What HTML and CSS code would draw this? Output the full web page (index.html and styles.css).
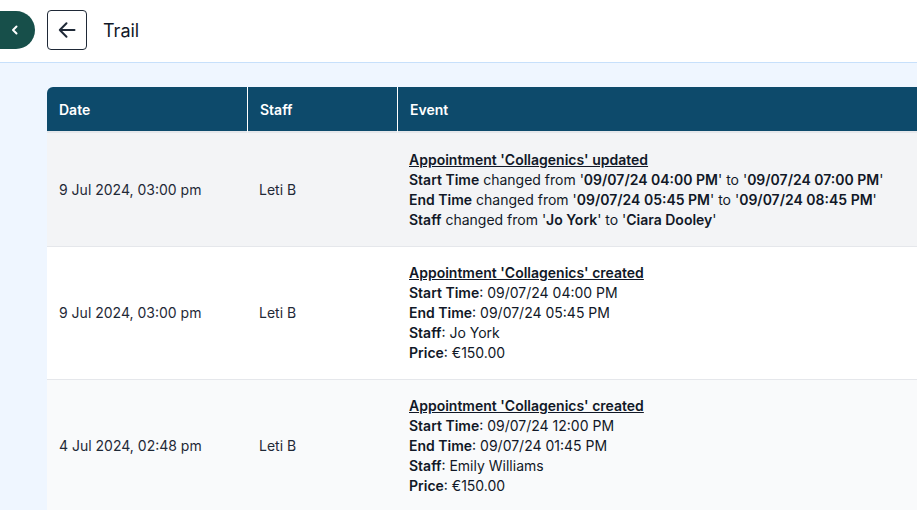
FILE: index.html
```html
<!DOCTYPE html>
<html lang="en">
<head>
    <meta charset="UTF-8">
    <meta name="viewport" content="width=device-width, initial-scale=1.0">
    <title>Trail</title>
    <link rel="stylesheet" href="styles.css">
</head>
<body>
    <header class="topbar">
        <button class="sidebar-toggle" aria-label="Collapse">
            <svg width="10" height="10" viewBox="0 0 10 10"><path d="M6.5 1.5 L3 5 L6.5 8.5" fill="none" stroke="#fff" stroke-width="2" stroke-linecap="round" stroke-linejoin="round"/></svg>
        </button>
        <button class="back-btn" aria-label="Back">
            <svg width="20" height="20" viewBox="0 0 20 20"><path d="M17.5 10 H2.8 M9.5 3.2 L2.8 10 L9.5 16.8" fill="none" stroke="#1f2937" stroke-width="2" stroke-linecap="round" stroke-linejoin="round"/></svg>
        </button>
        <h1>Trail</h1>
    </header>

    <main class="content">
        <table class="trail">
            <thead>
                <tr>
                    <th class="col-date">Date</th>
                    <th class="col-staff">Staff</th>
                    <th>Event</th>
                </tr>
            </thead>
            <tbody>
                <tr class="row-grey">
                    <td>9 Jul 2024, 03:00 pm</td>
                    <td>Leti B</td>
                    <td class="event">
                        <div class="event-title">Appointment 'Collagenics' updated</div>
                        <div><b>Start Time</b> changed from '<b>09/07/24 04:00 PM</b>' to '<b>09/07/24 07:00 PM</b>'</div>
                        <div><b>End Time</b> changed from '<b>09/07/24 05:45 PM</b>' to '<b>09/07/24 08:45 PM</b>'</div>
                        <div><b>Staff</b> changed from '<b>Jo York</b>' to '<b>Ciara Dooley</b>'</div>
                    </td>
                </tr>
                <tr class="row-white">
                    <td>9 Jul 2024, 03:00 pm</td>
                    <td>Leti B</td>
                    <td class="event">
                        <div class="event-title">Appointment 'Collagenics' created</div>
                        <div><b>Start Time</b>: 09/07/24 04:00 PM</div>
                        <div><b>End Time</b>: 09/07/24 05:45 PM</div>
                        <div><b>Staff</b>: Jo York</div>
                        <div><b>Price</b>: €150.00</div>
                    </td>
                </tr>
                <tr class="row-light">
                    <td>4 Jul 2024, 02:48 pm</td>
                    <td>Leti B</td>
                    <td class="event">
                        <div class="event-title">Appointment 'Collagenics' created</div>
                        <div><b>Start Time</b>: 09/07/24 12:00 PM</div>
                        <div><b>End Time</b>: 09/07/24 01:45 PM</div>
                        <div><b>Staff</b>: Emily Williams</div>
                        <div><b>Price</b>: €150.00</div>
                    </td>
                </tr>
            </tbody>
        </table>
    </main>
</body>
</html>
```

FILE: styles.css
```css
* {
    box-sizing: border-box;
}
body {
    margin: 0;
    font-family: Inter, "Noto Sans", Arial, sans-serif;
    color: #111827;
    background-color: #eff6ff;
    overflow: hidden;
}
.topbar {
    height: 63px;
    background-color: #fff;
    border-bottom: 1px solid #c7e0fb;
    display: flex;
    align-items: center;
    gap: 12px;
}
.sidebar-toggle {
    width: 35px;
    height: 38px;
    margin-top: -2px;
    background-color: #174f4a;
    border: none;
    border-radius: 0 19px 19px 0;
    display: flex;
    align-items: center;
    justify-content: center;
    padding: 0 5px 0 0;
    cursor: pointer;
}
.back-btn {
    width: 40px;
    height: 40px;
    margin-top: -2px;
    background: #fff;
    border: 1px solid #1f2937;
    border-radius: 4px;
    display: flex;
    align-items: center;
    justify-content: center;
    padding: 0;
    cursor: pointer;
}
.topbar h1 {
    margin: -2px 0 0 4px;
    font-size: 18px;
    font-weight: 400;
    color: #111827;
}
.content {
    padding: 24px 0 0 47px;
}
.trail {
    width: 1000px;
    border-collapse: separate;
    border-spacing: 0;
    font-size: 14px;
    line-height: 20px;
}
.trail th {
    background-color: #0d4a6b;
    color: #fff;
    font-weight: 600;
    text-align: left;
    height: 46px;
    padding: 2px 12px 0;
    border-left: 1px solid #fff;
    border-bottom: 2px solid #e5e7eb;
}
.trail th:first-child {
    border-left: none;
    border-top-left-radius: 6px;
}
.trail .col-date {
    width: 200px;
}
.trail .col-staff {
    width: 150px;
}
.trail td {
    padding: 16px 12px;
    border-bottom: 1px solid #e5e7eb;
    color: #1f2937;
    vertical-align: middle;
}
.trail td.event {
    color: #111827;
}
.trail b {
    font-weight: 600;
}
.event-title {
    font-weight: 600;
    text-decoration: underline;
}
.row-grey td {
    background-color: #f3f4f6;
}
.row-grey td.event {
    padding-top: 17px;
}
.row-white td {
    background-color: #fff;
}
.row-light td {
    background-color: #f9fafb;
}
```
